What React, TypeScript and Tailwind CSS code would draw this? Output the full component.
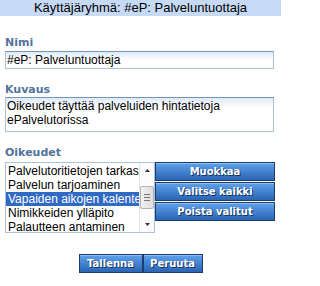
import { ReactNode } from "react";

const arial = "font-['Liberation_Sans',Arial,sans-serif]";
const verdana = "font-['DejaVu_Sans',Verdana,sans-serif]";

function Label({ children, className = "" }: { children: ReactNode; className?: string }) {
    return (
        <div className={`${verdana} text-[11px] leading-[13px] font-bold text-[#52739b] ${className}`}>{children}</div>
    );
}

function BlueButton({ children, className = "" }: { children: ReactNode; className?: string }) {
    return (
        <button
            className={`${verdana} text-[10px] font-bold text-white border border-[#1c3d6e] bg-linear-to-b from-[#5fa2ea] to-[#2a64b4] shadow-[inset_0_1px_0_#8cc0f5] [text-shadow:1px_1px_0_#17335e] flex items-center justify-center ${className}`}
        >
            {children}
        </button>
    );
}

const rights = [
    "Palvelutoritietojen tarkastelu",
    "Palvelun tarjoaminen",
    "Vapaiden aikojen kalenteri",
    "Nimikkeiden ylläpito",
    "Palautteen antaminen",
];

export default function App(): ReactNode {
    return (
        <div className={`w-[281px] h-[286px] bg-white ${arial} text-black`}>
            <div className="h-[16px] bg-[#c6daf5] text-[13px] leading-[16px] text-center">
                Käyttäjäryhmä: #eP: Palveluntuottaja
            </div>
            <div className="px-[5px]">
                <Label className="mt-[20px] mb-[2px]">Nimi</Label>
                <div className="w-[269px] h-[18px] border border-[#a9c2da] border-t-[#7195bd] bg-linear-to-b from-[#dfeaf6] to-white to-50% text-[12px] leading-[16px] pl-[1px]">
                    #eP: Palveluntuottaja
                </div>
                <Label className="mt-[14px] mb-[1px]">Kuvaus</Label>
                <div className="w-[269px] h-[35px] border border-[#a9c2da] border-t-[#7195bd] bg-linear-to-b from-[#dfeaf6] to-white to-30% text-[12px] leading-[14px] pl-[1px] pt-[1px]">
                    Oikeudet täyttää palveluiden hintatietoja
                    <br />
                    ePalvelutorissa
                </div>
                <Label className="mt-[14px] mb-[3px]">Oikeudet</Label>
                <div className="flex items-start">
                    <div className="w-[150px] h-[71px] border border-[#a9c2da] flex bg-white">
                        <div className="flex-1 overflow-hidden pt-[1px]">
                            {rights.map((r, i) => (
                                <div
                                    key={r}
                                    className={`h-[14px] text-[12px] leading-[14px] pl-[2px] whitespace-nowrap ${
                                        i === 2 ? "bg-[#316ac5] text-white" : ""
                                    }`}
                                >
                                    {r}
                                </div>
                            ))}
                        </div>
                        <div className="w-[15px] flex flex-col justify-between items-center bg-[#fbfbfb] border-l border-[#e6e6e6]">
                            <svg width="15" height="15" viewBox="0 0 15 15">
                                <path d="M5 9 L7.5 6 L10 9 Z" fill="#333" />
                            </svg>
                            <div className="w-[14px] h-[23px] border border-[#b5b5b5] rounded-[2px] bg-linear-to-r from-[#f2f2f2] to-[#dcdcdc] flex flex-col items-center justify-center gap-[2px]">
                                <div className="w-[6px] h-[1px] bg-[#777]" />
                                <div className="w-[6px] h-[1px] bg-[#777]" />
                                <div className="w-[6px] h-[1px] bg-[#777]" />
                            </div>
                            <svg width="15" height="15" viewBox="0 0 15 15">
                                <path d="M5 6 L7.5 9 L10 6 Z" fill="#333" />
                            </svg>
                        </div>
                    </div>
                    <div className="flex flex-col gap-[1px] w-[120px]">
                        <BlueButton className="h-[19px]">Muokkaa</BlueButton>
                        <BlueButton className="h-[19px]">Valitse kaikki</BlueButton>
                        <BlueButton className="h-[19px]">Poista valitut</BlueButton>
                    </div>
                </div>
            </div>
            <div className="flex justify-center mt-[21px]">
                <BlueButton className="w-[64px] h-[19px]">Tallenna</BlueButton>
                <BlueButton className="w-[60px] h-[19px]">Peruuta</BlueButton>
            </div>
        </div>
    );
}
